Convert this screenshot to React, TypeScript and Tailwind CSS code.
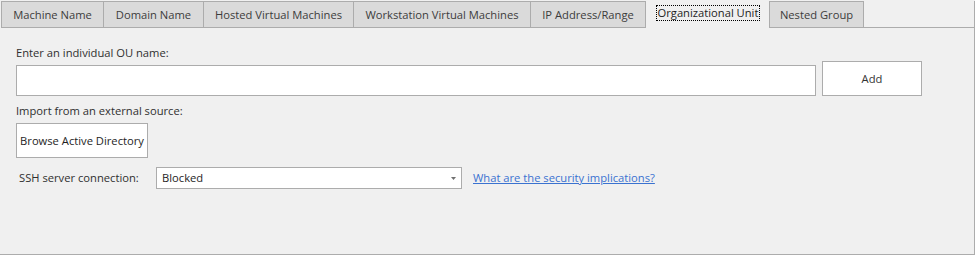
import React from 'react';

const tabs = [
  { label: 'Machine Name', width: 'w-[103px]' },
  { label: 'Domain Name', width: 'w-[101px]' },
  { label: 'Hosted Virtual Machines', width: 'w-[151px]' },
  { label: 'Workstation Virtual Machines', width: 'w-[178px]' },
  { label: 'IP Address/Range', width: 'w-[116px]' },
];

function Tab({ label, width, first }: { label: string; width: string; first?: boolean }) {
  return (
    <div
      className={`${width} ${first ? '' : '-ml-px'} h-[27px] flex items-center justify-center border border-[#acacac] bg-[#dadada] text-[#3c3c3c]`}
    >
      {label}
    </div>
  );
}

export default function App() {
  return (
    <div
      className="w-[975px] h-[255px] bg-[#f0f0f0] text-[11.2px] leading-4 text-[#2f2f2f] overflow-hidden whitespace-nowrap"
      style={{ fontFamily: '"Open Sans", "Noto Sans", sans-serif' }}
    >
      {/* tab strip */}
      <div className="flex pt-px pl-px h-[28px]">
        {tabs.map((t, i) => (
          <Tab key={t.label} label={t.label} width={t.width} first={i === 0} />
        ))}
        <div className="w-[124px] -mt-px h-[28px] flex items-start justify-center pt-[5px]">
          <span className="border border-dotted border-black px-px leading-[14px] text-[#1e1e1e]">
            Organizational Unit
          </span>
        </div>
        <Tab label="Nested Group" width="w-[95px]" />
        <div className="flex-1 h-[27px] border-b border-r border-[#acacac]" />
      </div>

      {/* panel */}
      <div className="h-[227px] border-r border-b border-[#acacac] pl-4 pt-[17px]">
        <div className="h-4">Enter an individual OU name:</div>
        <div className="flex items-end gap-[6px] h-[35px]">
          <div className="w-[800px] h-[31px] bg-white border border-[#acacac]" />
          <button className="w-[100px] h-[35px] bg-white border border-[#acacac] text-[#333333]">
            Add
          </button>
        </div>
        <div className="h-4 mt-[7px]">Import from an external source:</div>
        <button className="mt-[4px] w-[132px] h-[35px] bg-white border border-[#acacac] text-[#1e1e1e] flex items-center justify-center">
          Browse Active Directory
        </button>
        <div className="flex items-center mt-[9px] h-[22px]">
          <div className="w-[140px] shrink-0 pl-[3px]">SSH server connection:</div>
          <div className="w-[306px] shrink-0 h-[22px] bg-white border border-[#acacac] flex items-center justify-between pl-[5px] pr-[5px] text-[#1e1e1e]">
            <span>Blocked</span>
            <svg width="5" height="3" viewBox="0 0 5 3">
              <path d="M0 0 H5 L2.5 3 Z" fill="#707070" />
            </svg>
          </div>
          <a className="ml-[11px] text-[#3a72d0] underline cursor-pointer">What are the security implications?</a>
        </div>
      </div>
    </div>
  );
}
